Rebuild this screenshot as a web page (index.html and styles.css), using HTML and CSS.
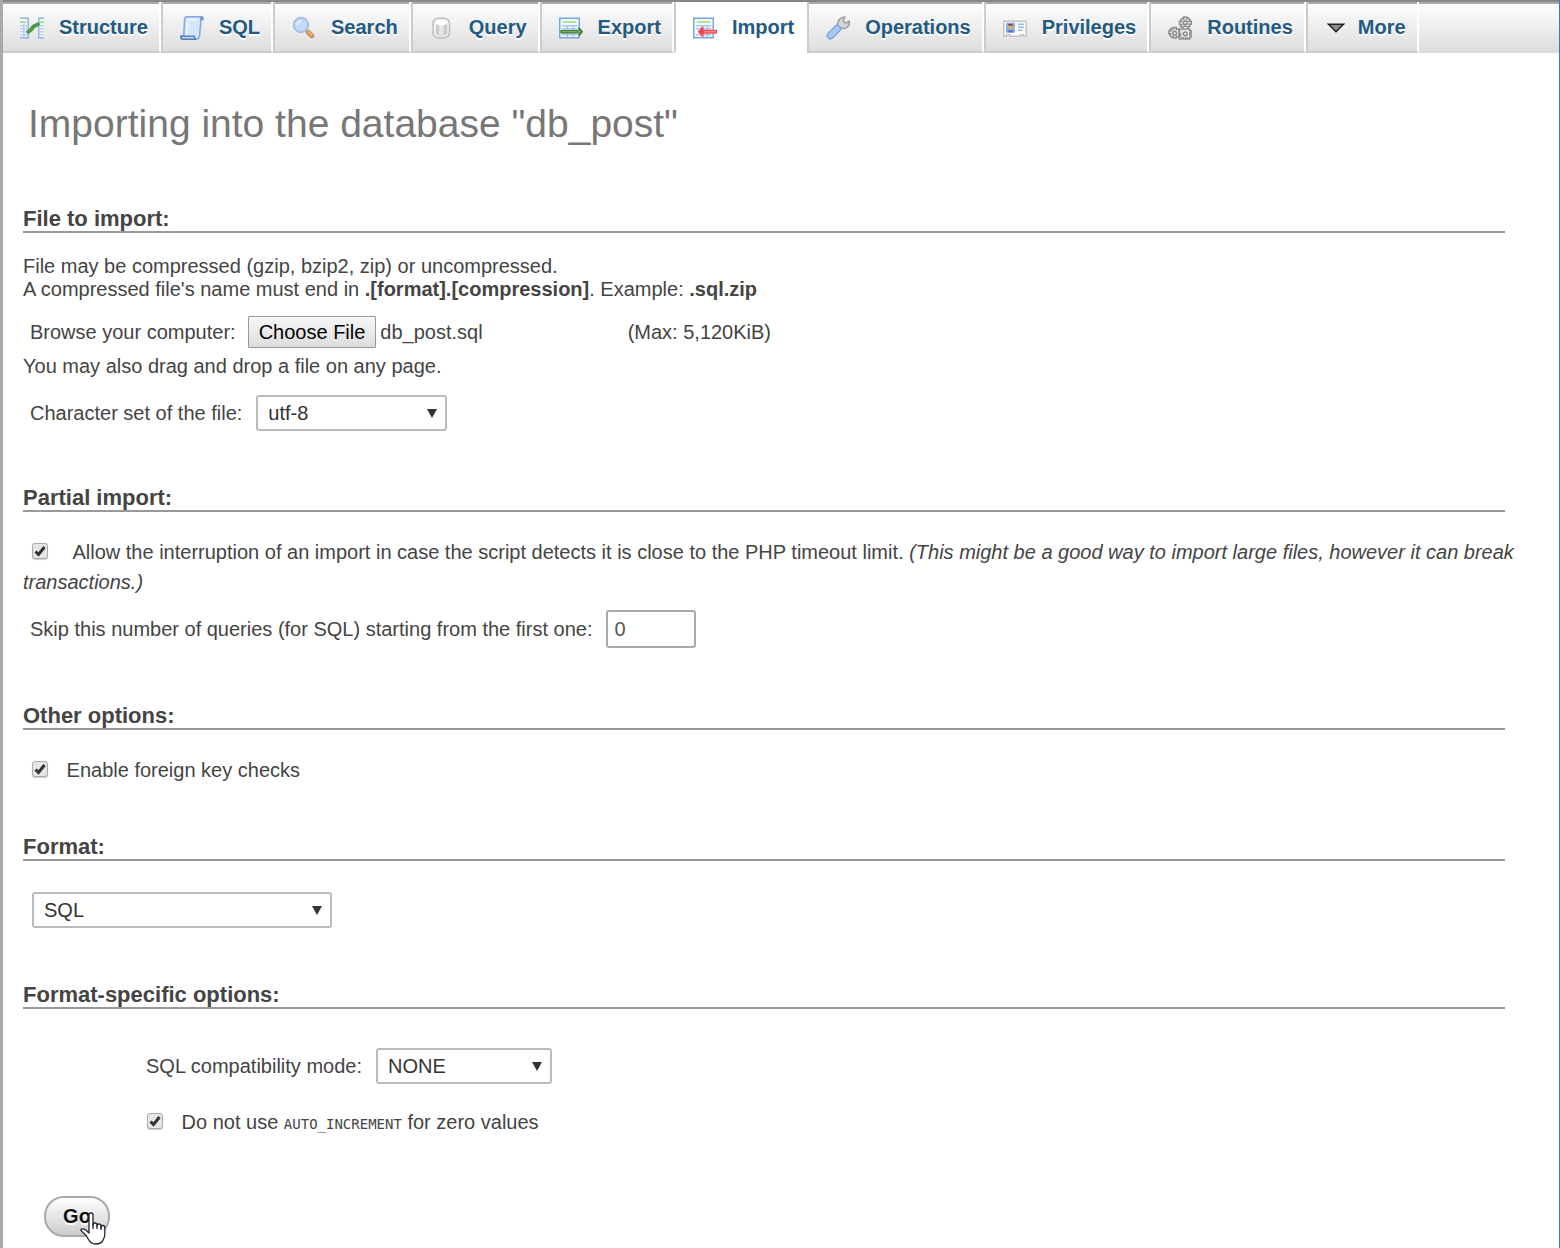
FILE: index.html
```
<!DOCTYPE html>
<html lang="en">
<head>
    <meta charset="UTF-8">
    <meta name="viewport" content="width=device-width, initial-scale=1.0">
    <title>Import - db_post</title>
    <link rel="stylesheet" href="styles.css">
</head>
<body>
    <nav class="tabs">
        <a class="tab" href="#structure">
            <svg class="icon" viewBox="0 0 16 16" aria-hidden="true">
                <path fill="#f4f8ff" stroke="#8fb4e6" d="M0 1.500h5.500v13H0M16 1.500h-3.500v13H16"/>
                <path stroke="#b9d0f2" d="M0 6.500h5M0 8.500h5M0 10.500h5M0 12.500h5M2.500 5v9M13 6.500h3M13 8.500h3M13 10.500h3M13 12.500h3"/>
                <path stroke="#8fdc7c" d="M0 4h4M13 4h3"/>
                <path fill="none" stroke="#4d9a45" stroke-width="2.600" stroke-linecap="round" d="M5.500 10.500L7.500 9L9 7L12 5.500"/>
            </svg>
            Structure
        </a>
        <a class="tab" href="#sql">
            <svg class="icon" viewBox="0 0 16 16" aria-hidden="true">
                <path fill="#d5e6fb" stroke="#7ea8e4" d="M4.500 .500h9.500q1.500 0 1.500 2h-1.500L13 13.500q-.300 2-2 2H2q-1.500 0-1.500-2h2L3 2.500Q3.200.500 4.500.500z"/>
                <path fill="none" stroke="#5580c2" d="M.500 13.500h9q0 2 1.500 2H2q-1.500 0-1.500-2zM14 2.500q0-2 1-1.500"/>
                <path stroke="#f3f8ff" d="M5 2.500h7M4.500 12l.700-8"/>
            </svg>
            SQL
        </a>
        <a class="tab" href="#search">
            <svg class="icon" viewBox="0 0 16 16" aria-hidden="true">
                <path stroke="#b98550" stroke-width="3.200" stroke-linecap="round" d="M10.800 10.800l2.400 2.400"/>
                <path stroke="#e9b56f" stroke-width="1.600" stroke-linecap="round" d="M10.800 10.500l2.400 2.400"/>
                <circle cx="6" cy="6" r="4.800" fill="#c4dcfa" stroke="#a3bfe8" stroke-width="1.300"/>
                <path fill="none" stroke="#eef5ff" d="M3.500 6a2.500 2.500 0 0 1 2.500-2.500"/>
            </svg>
            Search
        </a>
        <a class="tab" href="#query">
            <svg class="icon" viewBox="0 0 16 16" aria-hidden="true">
                <rect x="2" y="1.500" width="11" height="13" rx="3.500" fill="#f0f0f0" stroke="#bdbdbd"/>
                <path fill="#c9c9c9" d="M4 5h7.500v7q-4 2.500-7.500 0z"/>
                <path fill="#e7e7e7" d="M6 5h3v8q-2 0-3-.500z"/>
                <ellipse cx="7.700" cy="4.500" rx="4" ry="1.800" fill="#fff"/>
            </svg>
            Query
        </a>
        <a class="tab" href="#export">
            <svg class="icon" viewBox="0 0 16 16" aria-hidden="true">
                <rect x=".5" y="1.500" width="13" height="13" fill="#f6faff" stroke="#79a5e3"/>
                <path stroke="#8fdc7c" d="M2.500 4h9"/>
                <path fill="none" stroke="#a9c6ee" d="M2 6.500h10M2 8.500h10M2 12.500h10M5.500 6v8M9.500 6v8"/>
                <path stroke="#397d2d" stroke-width="2.400" d="M1 10.500h12"/>
                <path stroke="#79bd67" stroke-width=".8" d="M2 10.500h10"/>
                <path fill="none" stroke="#397d2d" stroke-width="1.300" d="M13 8l2.300 2.500L13 13"/>
            </svg>
            Export
        </a>
        <a class="tab active" href="#import" aria-current="page">
            <svg class="icon" viewBox="0 0 16 16" aria-hidden="true">
                <rect x=".5" y="1.500" width="13" height="13" fill="#f6faff" stroke="#79a5e3"/>
                <path stroke="#8fdc7c" d="M2.500 4h9"/>
                <path fill="none" stroke="#a9c6ee" d="M2 6.500h10M2 8.500h10M2 12.500h10M5.500 6v8M9.500 6v8"/>
                <path stroke="#f04545" stroke-width="2.600" d="M6 10.500h10"/>
                <path stroke="#ff9c9c" stroke-width=".8" d="M7 10.500h8"/>
                <path fill="#f04545" stroke="#f04545" d="M6.500 7.800L3.800 10.500l2.700 2.700z"/>
            </svg>
            Import
        </a>
        <a class="tab" href="#operations">
            <svg class="icon" viewBox="0 0 16 16" aria-hidden="true">
                <path fill="#d5d5d5" stroke="#9c9c9c" d="M8 7.500Q7 4.500 9 2.200 10.500.700 12.500.600L11.500 3.500 13 4.800 15.500 3.500Q16 6 14 7.500 12 9 9.500 8z"/>
                <path stroke="#7ba3e0" stroke-width="5.200" stroke-linecap="round" d="M3 13l4.500-4.500"/>
                <path stroke="#a9c9f5" stroke-width="3.400" stroke-linecap="round" d="M3 13l4.500-4.500"/>
            </svg>
            Operations
        </a>
        <a class="tab" href="#privileges">
            <svg class="icon" viewBox="0 0 16 16" aria-hidden="true">
                <path fill="#fbfbfb" stroke="#c4c4c4" d="M.500 3.500h15v10h-2v-1h-2v1h-7v-1h-2v1h-2z"/>
                <rect x="2" y="4.500" width="6" height="6.500" fill="#86b5f2"/>
                <path fill="#e2a670" d="M3.500 6h3v3h-3z"/>
                <path fill="#765130" d="M3.500 5.200h3v1.200h-3z"/>
                <path fill="#4a7bc9" d="M3 9.500h4V11H3z"/>
                <path stroke="#94b5ea" d="M10 5.500h4M10 7.500h4M10 9.500h3"/>
            </svg>
            Privileges
        </a>
        <a class="tab" href="#routines">
            <svg class="icon" viewBox="0 0 16 16" aria-hidden="true">
                <g fill="#e6e6e6" stroke="#8f8f8f">
                    <path d="M10.500 .600h2v1.300l1.300-.500.900 1.400-.800.700h1.600v2h-1.500l.600 1.300-1.300.900-1-.900h-1.500l-1 .900L8.400 7l.800-1.300H7.600v-2h1.500l-.700-1.200 1.300-1 .800.700z"/>
                    <path d="M3.500 7.600h2v1.300l1.500-.300.500 2v2l-.700 1.500-1.300-.500v1h-2v-1l-1.300.400-.900-1.300.500-.900H.600v-2h1.500L1.400 9l1-.900 1.100.700z"/>
                    <path d="M8 8.600h6.500v1.200h.900v1.500h-.900v1.200h.900V14h-.900v1.400H13v-.700h-1.200v.700h-1.500v-.700H9v.7H7.600v-2h.7v-1.500h-.7V9.800z"/>
                </g>
                <g fill="#fff" stroke="#888">
                    <circle cx="11.500" cy="4.500" r="1.200"/>
                    <circle cx="4.500" cy="11.500" r="1.200"/>
                    <circle cx="11.500" cy="11.900" r="1.200"/>
                </g>
            </svg>
            Routines
        </a>
        <a class="tab more" href="#more">
            <svg class="icon" viewBox="0 0 16 16" aria-hidden="true">
                <path fill="#8f8f8f" stroke="#222" d="M3 5.500h10L8 10.500z"/>
            </svg>
            More
        </a>
    </nav>

    <main class="content">
        <h2>Importing into the database "db_post"</h2>
        <form id="importForm">
            <section>
                <h3>File to import:</h3>
                <p class="note">
                    File may be compressed (gzip, bzip2, zip) or uncompressed.<br>
                    A compressed file's name must end in <strong>.[format].[compression]</strong>. Example: <strong>.sql.zip</strong>
                </p>
                <div class="row file-row">
                    <label for="importFile">Browse your computer:</label>
                    <input type="file" id="importFile">
                    <span>(Max: 5,120KiB)</span>
                </div>
                <p class="drop-note">You may also drag and drop a file on any page.</p>
                <div class="row charset-row">
                    <label for="charset">Character set of the file:</label>
                    <select id="charset" class="charset">
                        <option>utf-8</option>
                    </select>
                </div>
            </section>

            <section>
                <h3>Partial import:</h3>
                <p class="check-line interrupt">
                    <input type="checkbox" id="allowInterrupt" checked>
                    <label for="allowInterrupt">Allow the interruption of an import in case the script detects it is close to the PHP timeout limit. <em>(This might be a good way to import large files, however it can break transactions.)</em></label>
                </p>
                <div class="row skip-row">
                    <label for="skipQueries">Skip this number of queries (for SQL) starting from the first one:</label>
                    <input type="text" inputmode="numeric" id="skipQueries" value="0">
                </div>
            </section>

            <section>
                <h3>Other options:</h3>
                <p class="check-line">
                    <input type="checkbox" id="fkChecks" checked>
                    <label for="fkChecks">Enable foreign key checks</label>
                </p>
            </section>

            <section class="format">
                <h3>Format:</h3>
                <select class="format-select" aria-label="Format">
                    <option>SQL</option>
                </select>
            </section>

            <section>
                <h3>Format-specific options:</h3>
                <div class="specific">
                    <div class="row">
                        <label for="compat">SQL compatibility mode:</label>
                        <select id="compat" class="compat">
                            <option>NONE</option>
                        </select>
                    </div>
                    <p class="check-line">
                        <input type="checkbox" id="noAutoIncrement" checked>
                        <label for="noAutoIncrement">Do not use <code>AUTO_INCREMENT</code> for zero values</label>
                    </p>
                </div>
            </section>

            <div class="submit">
                <button type="submit">Go</button>
                <svg class="pointer" viewBox="0 0 26 33" aria-hidden="true">
                    <path fill="#fff" stroke="#223" stroke-width="1.300" stroke-linejoin="round" d="M9 19V3q0-2 2-2t2 2v10q0-2 2-2t2 2v1q0-2 2-2t2 2v1.500q0-2 1.900-2t1.900 2V22q0 3-1.500 5.500-1.500 4.500-7.800 4.500-4.500 0-7-4.500Q6.500 23 2 19.500 0 17.500 1.500 17q3-1 7.500 4z"/>
                    <path stroke="#223" stroke-width="1.300" d="M13 12v5M17 13v4M21 14v4"/>
                </svg>
            </div>
        </form>
    </main>

    <script>
        const files = new DataTransfer();
        files.items.add(new File([''], 'db_post.sql'));
        document.getElementById('importFile').files = files.files;

        document.getElementById('importForm').addEventListener('submit', (event) => {
            event.preventDefault();
        });
    </script>
</body>
</html>
```
FILE: styles.css
```
* {
    box-sizing: border-box;
}
body {
    margin: 0;
    min-height: 100vh;
    border-left: 3px solid #aaa;
    border-right: 1px solid #2f7fc4;
    font-family: "Liberation Sans", Arial, sans-serif;
    font-size: 20px;
    line-height: 23px;
    color: #444;
    background: #fff;
}
h2, h3, p {
    margin: 0;
}

/* Top tabs */
.tabs {
    display: flex;
    height: 53px;
    border-top: 2px solid #888;
    background: linear-gradient(#fff, #dcdcdc);
    box-shadow: inset 0 2px #aaa;
}
.tab {
    display: flex;
    align-items: center;
    gap: 15px;
    padding: 2px 11px 0 17px;
    border-left: 2px solid #ccc;
    border-right: 2px solid #fff;
    border-bottom: 2px solid #ccc;
    color: #235a81;
    font-weight: bold;
    text-decoration: none;
    text-shadow: 0 2px 0 #fff;
}
.tab:first-child {
    border-left: 0;
}
.tab.active {
    background: #fff;
    border-bottom-color: #fff;
}
.tab.more {
    gap: 10px;
    padding-left: 16px;
}
.icon {
    width: 24px;
    height: 24px;
    fill: none;
}

/* Page */
.content {
    padding: 47px 54px 12px 20px;
}
h2 {
    padding-left: 5px;
    font-size: 39px;
    line-height: 48px;
    font-weight: normal;
    color: #777;
}
h3 {
    padding-top: 1px;
    border-bottom: 2px solid #999;
    font-size: 22px;
    line-height: 24px;
}
section {
    margin-top: 54px;
}
section:first-child {
    margin-top: 58px;
}
section.format {
    margin-top: 49px;
}
.row {
    display: flex;
    align-items: center;
    padding-left: 7px;
}
.note {
    margin-top: 22px;
}
.file-row {
    margin-top: 15px;
}
.drop-note {
    margin-top: 7px;
}
.charset-row {
    margin-top: 17px;
}
.check-line {
    margin-top: 25px;
    line-height: 30px;
}
.skip-row {
    margin: 13px 0 55px;
}

/* Controls */
input, select, button {
    font-family: inherit;
    font-size: 20px;
    color: #333;
}
input[type="file"] {
    width: 364px;
    margin: 0 16px 0 12px;
    color: #444;
}
input[type="file"]::file-selector-button {
    height: 32px;
    padding: 0 10px;
    margin-right: 4px;
    border: 1px solid #999;
    border-radius: 1px;
    background: linear-gradient(#f6f6f6, #ddd);
    font: inherit;
    color: #000;
}
input[type="text"] {
    width: 90px;
    height: 38px;
    margin-left: 14px;
    padding: 0 6px;
    border: 2px solid #aaa;
    border-radius: 3px;
    color: #555;
}
input[type="checkbox"] {
    appearance: none;
    width: 16px;
    height: 16px;
    margin: 0 13px 0 9px;
    border: 1px solid #aaa;
    border-radius: 3px;
    background: url("data:image/svg+xml,%3Csvg xmlns='http://www.w3.org/2000/svg' viewBox='0 0 14 14'%3E%3Cpath fill='none' stroke='%23333' stroke-width='3' d='M2.500 7.500l3 3L11.500 3'/%3E%3C/svg%3E") center / 14px 14px no-repeat #e6e6e6;
    box-shadow: 0 1px 1px #ccc;
}
.interrupt {
    margin-right: -20px;
}
.interrupt input[type="checkbox"] {
    margin-right: 20px;
}
select {
    appearance: none;
    height: 36px;
    padding: 0 10px;
    border: 2px solid #bbb;
    border-radius: 3px;
    background: url("data:image/svg+xml,%3Csvg xmlns='http://www.w3.org/2000/svg' viewBox='0 0 10 9'%3E%3Cpath fill='%23333' d='M0 0h10L5 9z'/%3E%3C/svg%3E") right 8px center / 10px 9px no-repeat #fff;
}
.charset {
    width: 191px;
    margin-left: 14px;
}
.format-select {
    display: block;
    width: 300px;
    margin: 31px 0 0 9px;
}
.specific {
    margin-top: 39px;
    padding-left: 116px;
}
.specific .check-line {
    margin-top: 23px;
}
.specific input[type="checkbox"] {
    margin-left: 8px;
}
.compat {
    width: 176px;
    margin-left: 14px;
}
code {
    font-family: "DejaVu Sans Mono", monospace;
    font-size: 14px;
}
.submit {
    position: relative;
    margin: 57px 0 0 21px;
}
button {
    display: block;
    width: 66px;
    height: 41px;
    padding: 0;
    border: 2px solid #aaa;
    border-radius: 20px;
    background: linear-gradient(#fff, #ccc);
    font-weight: bold;
    color: #111;
    text-shadow: 0 2px 0 #fff;
    cursor: pointer;
}
.pointer {
    position: absolute;
    top: 16px;
    left: 36px;
    width: 26px;
    height: 33px;
}
```
